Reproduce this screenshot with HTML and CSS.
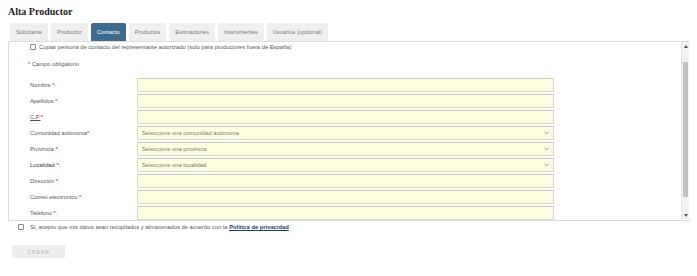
FILE: index.html
```html
<!DOCTYPE html>
<html lang="es">

<head>
    <meta charset="UTF-8">
    <meta name="viewport" content="width=device-width, initial-scale=1.0">
    <title>Alta Productor</title>
    <link rel="stylesheet" href="styles.css">
</head>

<body>
    <div class="page">
        <h1 class="title">Alta Productor</h1>

        <!-- Tabs -->
        <div class="tabs">
            <div class="tab">Solicitante</div>
            <div class="tab">Productor</div>
            <div class="tab active">Contacto</div>
            <div class="tab">Productos</div>
            <div class="tab">Estimaciones</div>
            <div class="tab">Intervinientes</div>
            <div class="tab">Usuarios (opcional)</div>
        </div>

        <!-- Tab panel -->
        <div class="panel">
            <div class="panel-body">
                <label class="check-row">
                    <input type="checkbox" class="check">
                    <span>Copiar persona de contacto del representante autorizado (solo para productores fuera de España)</span>
                </label>

                <div class="required-note"><span class="req">*</span> Campo obligatorio</div>

                <div class="form-grid">
                    <label class="field-label">Nombre <span class="req">*</span>:</label>
                    <input type="text" class="field">

                    <label class="field-label">Apellidos <span class="req">*</span>:</label>
                    <input type="text" class="field">

                    <label class="field-label"><abbr class="abbr">C.P.</abbr><span class="req">*</span>:</label>
                    <input type="text" class="field">

                    <label class="field-label">Comunidad autónoma<span class="req">*</span>:</label>
                    <select class="field select">
                        <option>Seleccione una comunidad autónoma</option>
                    </select>

                    <label class="field-label">Provincia <span class="req">*</span>:</label>
                    <select class="field select">
                        <option>Seleccione una provincia</option>
                    </select>

                    <label class="field-label dark">Localidad <span class="req">*</span>:</label>
                    <select class="field select">
                        <option>Seleccione una localidad</option>
                    </select>

                    <label class="field-label">Dirección <span class="req">*</span>:</label>
                    <input type="text" class="field">

                    <label class="field-label">Correo electrónico <span class="req">*</span>:</label>
                    <input type="text" class="field">

                    <label class="field-label">Teléfono <span class="req">*</span>:</label>
                    <input type="text" class="field">
                </div>
            </div>

            <!-- Scrollbar -->
            <div class="scrollbar">
                <div class="scroll-btn">
                    <svg width="4" height="3" viewBox="0 0 4 3"><path d="M0 3 L2 0 L4 3 Z" fill="#505050"/></svg>
                </div>
                <div class="scroll-track">
                    <div class="scroll-thumb"></div>
                </div>
                <div class="scroll-btn">
                    <svg width="4" height="3" viewBox="0 0 4 3"><path d="M0 0 L4 0 L2 3 Z" fill="#505050"/></svg>
                </div>
            </div>
        </div>

        <!-- Privacy consent -->
        <label class="privacy-row">
            <input type="checkbox" class="check">
            <span>Sí, acepto que mis datos sean recopilados y almacenados de acuerdo con la <a href="#" class="privacy-link">Política de privacidad</a></span>
        </label>

        <button class="btn-create" disabled>CREAR</button>
    </div>
</body>

</html>
```

FILE: styles.css
```css
body {
    margin: 0;
    padding: 0;
    background-color: #ffffff;
    font-family: "Liberation Sans", Arial, sans-serif;
    color: #555;
}

.page {
    padding: 6px 7px 0 8px;
}

.title {
    margin: 0;
    font-family: "Liberation Serif", "Times New Roman", serif;
    font-size: 10px;
    line-height: 12px;
    font-weight: bold;
    color: #222;
}

/* Tabs */
.tabs {
    display: flex;
    gap: 3px;
    margin-top: 5px;
    padding-left: 2px;
}

.tab {
    background-color: #efefef;
    color: #7a7a7a;
    font-size: 5.7px;
    line-height: 18px;
    padding: 0 6px;
    border-radius: 2px 2px 0 0;
}

.tab.active {
    background-color: #3e6a8e;
    color: #ffffff;
}

/* Panel */
.panel {
    display: flex;
    height: 178px;
    border-top: 1px solid #dcdcdc;
    border-left: 1px solid #dcdcdc;
    border-bottom: 1px solid #dcdcdc;
}

.panel-body {
    flex: 1;
    overflow: hidden;
    padding-left: 21px;
}

.check-row {
    display: flex;
    align-items: center;
    gap: 3px;
    height: 10px;
    font-size: 5.8px;
    color: #555;
}

.check {
    appearance: none;
    -webkit-appearance: none;
    margin: 0;
    width: 6px;
    height: 6px;
    border: 1px solid #8a8a8a;
    border-radius: 1px;
    background-color: #fff;
    box-sizing: border-box;
}

.required-note {
    margin-top: 7px;
    margin-left: -2px;
    height: 10px;
    line-height: 10px;
    font-size: 5.8px;
    color: #555;
}

.req {
    color: #d0021b;
}

.form-grid {
    display: grid;
    grid-template-columns: 107px 417px;
    grid-auto-rows: 14px;
    row-gap: 2px;
    margin-top: 9px;
}

.field-label {
    display: flex;
    align-items: center;
    font-size: 5.8px;
    color: #555;
    white-space: pre;
}

.field-label.dark {
    color: #333;
}

.abbr {
    text-decoration: underline;
}

.field {
    box-sizing: border-box;
    margin: 0;
    width: 417px;
    height: 14px;
    border: 1px solid #d8d8cc;
    border-top-color: #c8c8bc;
    background-color: #fffee0;
    font-family: "Liberation Sans", Arial, sans-serif;
    font-size: 5.8px;
    color: #777;
    padding: 0 4px;
    outline: none;
}

.select {
    appearance: none;
    -webkit-appearance: none;
    border-radius: 0;
    background-image: url("data:image/svg+xml;utf8,<svg xmlns='http://www.w3.org/2000/svg' width='5' height='4' viewBox='0 0 5 4'><path d='M0.5 0.8 L2.5 3 L4.5 0.8' fill='none' stroke='%23999' stroke-width='1'/></svg>");
    background-repeat: no-repeat;
    background-position: right 4px center;
}

/* Scrollbar */
.scrollbar {
    display: flex;
    flex-direction: column;
    width: 7px;
    margin: 0 1px 1px 2px;
    background-color: #f1f1f1;
    border-left: 1px solid #e2e2e2;
}

.scroll-btn {
    height: 8px;
    display: flex;
    align-items: center;
    justify-content: center;
}

.scroll-track {
    flex: 1;
    padding-top: 12px;
    padding-bottom: 14px;
}

.scroll-thumb {
    height: 100%;
    margin: 0 1px;
    background-color: #c1c1c1;
}

/* Privacy */
.privacy-row {
    display: flex;
    align-items: center;
    gap: 6px;
    margin-top: 2px;
    margin-left: 10px;
    height: 8px;
    font-size: 5.8px;
    color: #555;
}

.privacy-link {
    color: #1c3d6e;
    font-weight: bold;
    text-decoration: underline;
}

.btn-create {
    display: block;
    margin-top: 14px;
    margin-left: 4px;
    width: 53px;
    height: 13px;
    border: none;
    background-color: #eeeeee;
    color: #b5b5b5;
    font-family: "Liberation Sans", Arial, sans-serif;
    font-size: 5px;
    letter-spacing: 1px;
    padding: 0;
}
```
